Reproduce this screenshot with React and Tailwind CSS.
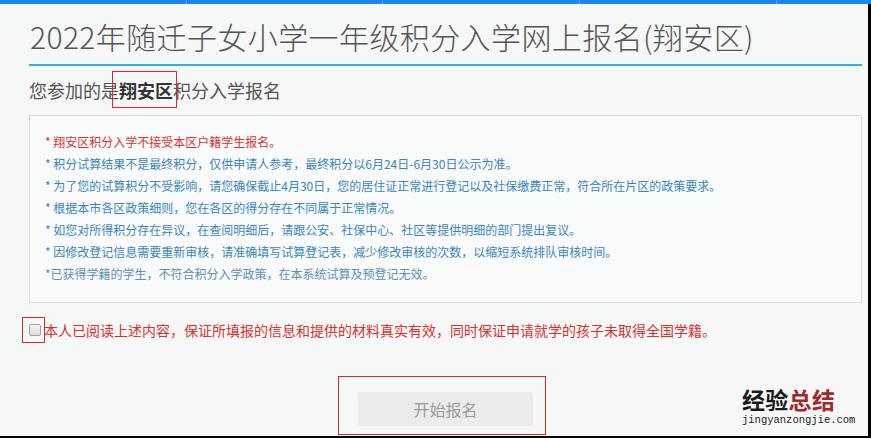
const notices = [
    { text: "* 翔安区积分入学不接受本区户籍学生报名。", red: true },
    { text: "* 积分试算结果不是最终积分，仅供申请人参考，最终积分以6月24日-6月30日公示为准。" },
    { text: "* 为了您的试算积分不受影响，请您确保截止4月30日，您的居住证正常进行登记以及社保缴费正常，符合所在片区的政策要求。" },
    { text: "* 根据本市各区政策细则，您在各区的得分存在不同属于正常情况。" },
    { text: "* 如您对所得积分存在异议，在查阅明细后，请跟公安、社保中心、社区等提供明细的部门提出复议。" },
    { text: "* 因修改登记信息需要重新审核，请准确填写试算登记表，减少修改审核的次数，以缩短系统排队审核时间。" },
    { text: "*已获得学籍的学生，不符合积分入学政策，在本系统试算及预登记无效。", muted: true },
];

// top nav strip, only the bottom 4px are visible in the shot
function TopStrip() {
    return (
        <div className="flex h-[4px] w-full bg-[#1a88ee]">
            <div className="w-[187px] border-r border-[#5aa9f2]" />
            <div className="w-[196px] border-r border-[#5aa9f2]" />
            <div className="w-[197px] border-r border-[#5aa9f2]" />
            <div className="w-[197px] border-r border-[#5aa9f2]" />
            <div className="flex-1" />
        </div>
    );
}

function Watermark() {
    return (
        <div className="absolute left-[742px] top-[386px] flex flex-col items-start">
            <div className="text-[23px] font-bold leading-[26px] tracking-[0.3px]">
                <span className="text-[#1a1a1a]">经验</span>
                <span className="text-[#a3282a]">总结</span>
            </div>
            <div className="mt-[2px] font-['Liberation_Mono',monospace] text-[10.5px] leading-[12px] text-[#222]">
                jingyanzongjie.com
            </div>
        </div>
    );
}

export default function App() {
    return (
        <div className="relative flex h-[438px] w-[871px] flex-col overflow-hidden bg-[#f6f7f7] font-['Noto_Sans_CJK_SC','Noto_Sans',sans-serif]">
            <TopStrip />
            <div className="flex flex-1 flex-col border-r-[3px] border-b-2 border-black pl-[29px] pr-[6px]">
                {/* title */}
                <div className="mt-[14px] border-b-2 border-[#2fb2df] pb-[10px]">
                    <h1 className="pl-[1px] text-[30px] font-light leading-[36px] tracking-[0.4px] text-[#555]">
                        2022年随迁子女小学一年级积分入学网上报名(翔安区)
                    </h1>
                </div>

                <p className="mt-[12px] text-[18px] leading-[24px] text-[#555]">
                    您参加的是
                    <span className="relative font-bold text-[#333]">
                        翔安区
                        <span className="absolute -left-[7px] -right-[4px] -top-[6px] -bottom-[5px] border-[1.5px] border-[#e0262a]" />
                    </span>
                    积分入学报名
                </p>

                {/* notice card */}
                <div className="mt-[13px] border border-[#dcdcdc] bg-[#f9fafa] px-[15px] pt-[15px] pb-[17px]">
                    {notices.map((n) => (
                        <div
                            key={n.text}
                            className={
                                "text-[12px] leading-[22px] " +
                                (n.red
                                    ? "text-[#d8332f]"
                                    : n.muted
                                      ? "text-[#5b8fb6]"
                                      : "text-[#3a86bb]")
                            }
                        >
                            {n.text}
                        </div>
                    ))}
                </div>

                {/* agreement */}
                <label className="mt-[17px] flex items-center text-[14px] leading-[20px] text-[#d8322e]">
                    <span className="relative mr-[3px] inline-block h-[12px] w-[12px] rounded-[2px] border border-[#a0a0a0] bg-gradient-to-b from-[#f4f4f4] to-[#dcdcdc]">
                        <span className="absolute -left-[8px] -right-[5px] -top-[8px] -bottom-[8px] border-[1.5px] border-[#e0262a]" />
                    </span>
                    本人已阅读上述内容，保证所填报的信息和提供的材料真实有效，同时保证申请就学的孩子未取得全国学籍。
                </label>

                <div className="mt-[52px] flex justify-center">
                    <div className="relative">
                        <button className="h-[34px] w-[175px] rounded-[3px] bg-[#ebebeb] text-[16px] text-[#9a9a9a]">
                            开始报名
                        </button>
                        <span className="absolute -left-[20px] -right-[13px] -top-[16px] -bottom-[9px] border-[1.5px] border-[#e0262a]" />
                    </div>
                </div>
            </div>
            <Watermark />
        </div>
    );
}
